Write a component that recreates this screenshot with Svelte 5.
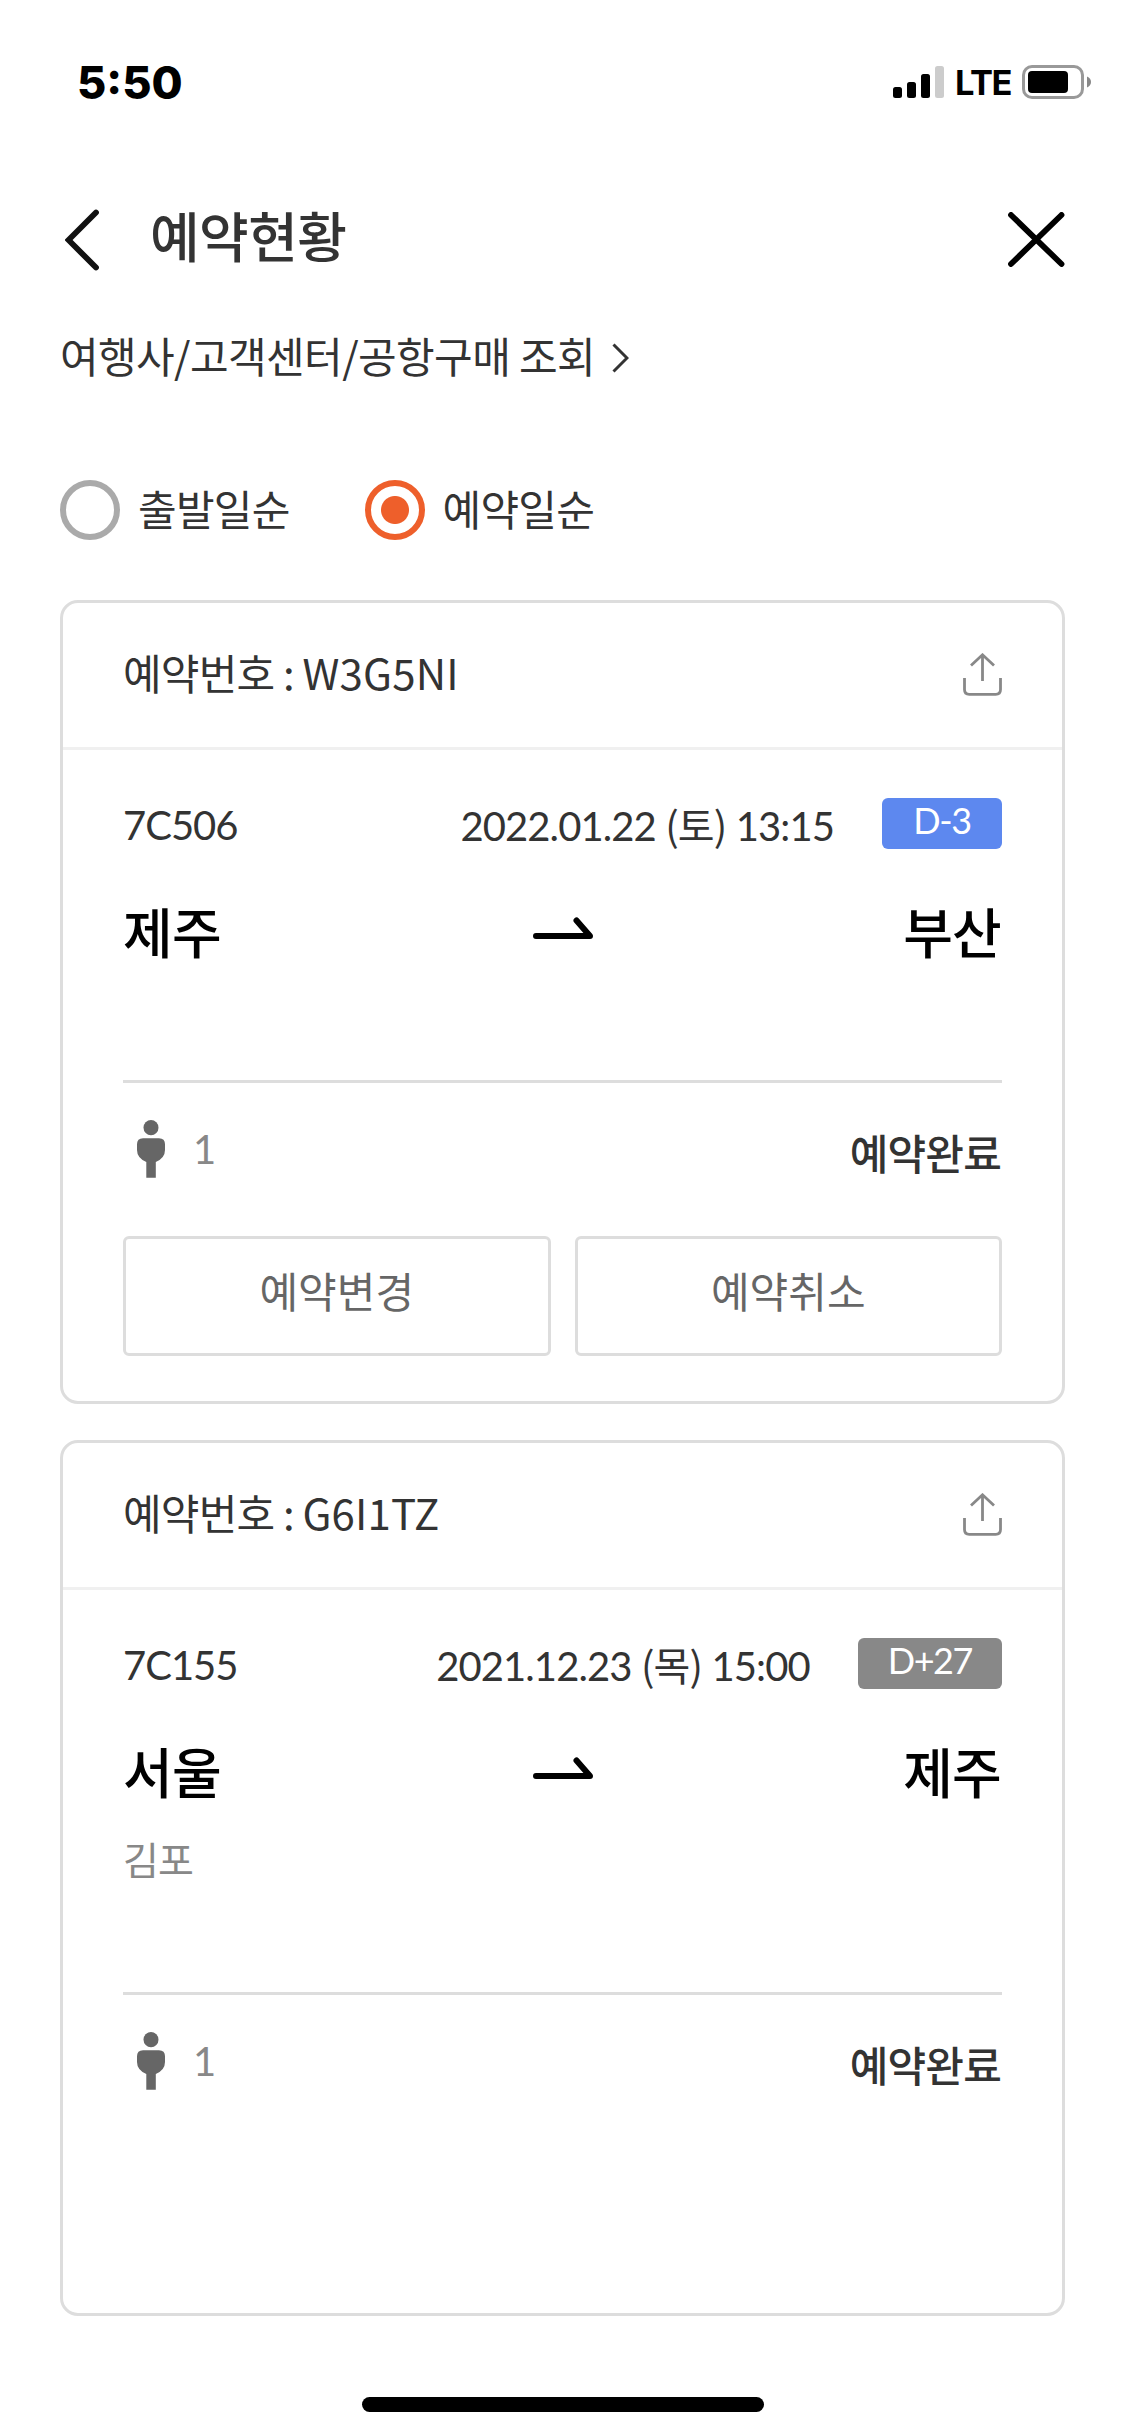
<script>
  let sortBy = $state('booked');

  const sortOptions = [
    { value: 'departure', label: '출발일순' },
    { value: 'booked', label: '예약일순' }
  ];

  const bookings = [
    {
      code: 'W3G5NI',
      flight: '7C506',
      date: '2022.01.22',
      day: '토',
      time: '13:15',
      dday: 'D-3',
      upcoming: true,
      from: '제주',
      to: '부산',
      passengers: 1,
      status: '예약완료'
    },
    {
      code: 'G6I1TZ',
      flight: '7C155',
      date: '2021.12.23',
      day: '목',
      time: '15:00',
      dday: 'D+27',
      upcoming: false,
      from: '서울',
      fromAirport: '김포',
      to: '제주',
      passengers: 1,
      status: '예약완료'
    }
  ];
</script>

<div class="screen">
  <div class="status-bar">
    <span class="clock">5:50</span>
    <div class="indicators">
      <svg width="51" height="32" viewBox="0 0 51 32">
        <rect x="0" y="21" width="9" height="11" rx="2.5" />
        <rect x="14" y="16" width="9" height="16" rx="2.5" />
        <rect x="28" y="8" width="9" height="24" rx="2.5" />
        <rect x="42" y="0" width="9" height="32" rx="2.5" fill="#ccc" />
      </svg>
      <span class="network">LTE</span>
      <svg width="69" height="34" viewBox="0 0 69 34">
        <rect x="1.5" y="1.5" width="59" height="31" rx="8.5" fill="none" stroke="#999" stroke-width="3" />
        <rect x="6" y="6" width="40" height="22" rx="4" />
        <path d="M65 11.5c2.600 1 4 3 4 5.500s-1.400 4.500-4 5.500z" fill="#888" />
      </svg>
    </div>
  </div>

  <header>
    <button aria-label="뒤로">
      <svg width="34" height="62" viewBox="0 0 34 62">
        <path d="M31 3.500L3.500 31L31 58.500" fill="none" stroke="#111" stroke-width="5.800" stroke-linecap="round" />
      </svg>
    </button>
    <h1>예약현황</h1>
    <button class="close" aria-label="닫기">
      <svg width="57" height="55" viewBox="0 0 57 55">
        <path d="M3 3L53.500 52M53.500 3L3 52" stroke="#000" stroke-width="5.800" stroke-linecap="round" />
      </svg>
    </button>
  </header>

  <a class="lookup" href="#lookup">
    <span>여행사/고객센터/공항구매 조회</span>
    <svg width="17" height="30" viewBox="0 0 17 30">
      <path d="M1.500 1.500L15 15L1.500 28.500" fill="none" stroke="#333" stroke-width="3" />
    </svg>
  </a>

  <div class="sort">
    {#each sortOptions as option}
      <label>
        <input type="radio" name="sort" value={option.value} bind:group={sortBy} />
        <span>{option.label}</span>
      </label>
    {/each}
  </div>

  <main>
    {#each bookings as b}
      <section class="card">
        <div class="card-head">
          <span class="title">예약번호 : <span class="code">{b.code}</span></span>
          <svg width="39" height="43" viewBox="0 0 39 43" fill="none" stroke="#888" stroke-width="2.800">
            <path d="M19.500 28V2M8 12.500L19.500 1.800L31 12.500" />
            <path d="M1.500 25V36.500Q1.500 41.300 6.300 41.300H32.700Q37.500 41.300 37.500 36.500V25" />
          </svg>
        </div>
        <div class="card-body">
          <div class="flight">
            <span class="num">{b.flight}</span>
            <span class="when">{b.date} <span class="day">({b.day})</span> {b.time}</span>
            <span class="dday" class:upcoming={b.upcoming}>{b.dday}</span>
          </div>
          <div class="route">
            <strong>{b.from}</strong>
            <svg width="60" height="24" viewBox="0 0 60 24">
              <path d="M3 19H57L43.500 3.500" fill="none" stroke="#000" stroke-width="6" stroke-linecap="round" stroke-linejoin="round" />
            </svg>
            <strong class="to">{b.to}</strong>
          </div>
          {#if b.fromAirport}
            <div class="airport">{b.fromAirport}</div>
          {/if}
          <div class="summary">
            <svg width="28" height="58" viewBox="0 0 28 58" fill="#666">
              <ellipse cx="14" cy="7.700" rx="7.500" ry="7.600" />
              <path d="M6 18.300H22Q28 18.300 28 24.300V30Q28 38 18.800 42V57.700H9.300V42Q0 38 0 30V24.300Q0 18.300 6 18.300Z" />
            </svg>
            <span class="count">{b.passengers}</span>
            <span class="state">{b.status}</span>
          </div>
          <div class="actions">
            {#if b.upcoming}
              <button>예약변경</button>
              <button>예약취소</button>
            {/if}
          </div>
        </div>
      </section>
    {/each}
  </main>

  <div class="home-indicator"></div>
</div>

<style>
  :global(body) {
    background: #fff;
  }

  .screen {
    box-sizing: border-box;
    width: 1125px;
    height: 2436px;
    padding: 0 60px;
    display: flex;
    flex-direction: column;
    overflow: hidden;
    background: #fff;
    color: #333;
    font-family: 'Noto Sans CJK KR', sans-serif;
    font-size: 42px;
    line-height: 60px;
  }

  svg {
    display: block;
    flex: none;
  }

  button {
    padding: 0;
    border: 0;
    background: none;
    font: inherit;
    color: inherit;
  }

  .status-bar {
    height: 164px;
    margin-right: -26px;
    padding-left: 17px;
    display: flex;
    justify-content: space-between;
    align-items: center;
    color: #000;
  }

  .clock {
    margin-top: 1px;
    font-family: Inter, sans-serif;
    font-weight: 800;
    font-size: 45px;
  }

  .indicators {
    display: flex;
    align-items: center;
  }

  .network {
    width: 78px;
    margin-top: 2px;
    font-family: Inter, sans-serif;
    font-weight: 700;
    font-size: 34.500px;
    letter-spacing: -1.500px;
    text-align: center;
  }

  header {
    height: 152px;
    padding-left: 5px;
    display: flex;
    align-items: center;
  }

  .close {
    margin-bottom: 2px;
  }

  h1 {
    flex: 1;
    margin: 0 0 11px 51px;
    font-size: 54px;
    font-weight: 500;
    line-height: 80px;
    letter-spacing: -0.6px;
  }

  .lookup {
    height: 84px;
    display: flex;
    align-items: center;
    gap: 17px;
    color: inherit;
    text-decoration: none;
    letter-spacing: -0.6px;
  }

  .lookup span {
    margin-bottom: 6px;
  }

  .lookup svg {
    margin-bottom: 1px;
  }

  .sort {
    height: 60px;
    margin-top: 80px;
    display: flex;
    gap: 75px;
  }

  label {
    display: flex;
    align-items: center;
    gap: 18px;
    letter-spacing: -0.75px;
  }

  label span {
    margin-bottom: 4px;
  }

  input {
    appearance: none;
    box-sizing: border-box;
    width: 60px;
    height: 60px;
    margin: 0;
    border: 6px solid #aaa;
    border-radius: 50%;
  }

  input:checked {
    border-color: #ee5f2b;
    background: radial-gradient(circle, #ee5f2b 13.500px, #fff 14.500px);
  }

  main {
    margin-top: 60px;
    display: flex;
    flex-direction: column;
    gap: 36px;
  }

  .card {
    border: 3px solid #ddd;
    border-radius: 18px;
  }

  .card-head {
    height: 144px;
    padding: 0 60px;
    display: flex;
    justify-content: space-between;
    align-items: center;
    border-bottom: 3px solid #f0f0f0;
  }

  .card-head svg {
    margin-bottom: 2px;
  }

  .title {
    margin-bottom: 6px;
    letter-spacing: -0.8px;
  }

  .code {
    letter-spacing: 0.2px;
  }

  .card-body {
    padding: 48px 60px 45px;
  }

  .flight {
    height: 51px;
    display: flex;
    align-items: center;
  }

  .num,
  .when,
  .count {
    font-family: Lato, 'Noto Sans CJK KR', sans-serif;
    font-size: 40px;
    letter-spacing: -0.025em;
  }

  .num {
    margin-top: 3px;
  }

  .when {
    margin: 2px 0 0 auto;
    letter-spacing: -0.9px;
  }

  .day {
    font-family: 'Noto Sans CJK KR', sans-serif;
  }

  .dday {
    box-sizing: border-box;
    height: 51px;
    min-width: 120px;
    margin-left: 48px;
    padding: 0 30px;
    border-radius: 6px;
    background: #888;
    color: #fff;
    font-family: Lato, sans-serif;
    font-size: 36px;
    line-height: 45px;
    letter-spacing: -0.04em;
    text-align: center;
  }

  .dday.upcoming {
    background: #5d88ef;
  }

  .route {
    height: 80px;
    margin-top: 42px;
    display: flex;
    align-items: center;
    color: #000;
  }

  .route svg {
    margin-bottom: 4px;
  }

  strong {
    flex: 1;
    font-size: 54px;
    font-weight: 500;
    line-height: 80px;
    letter-spacing: -0.8px;
  }

  .to {
    padding-right: 1px;
    text-align: right;
  }

  strong:first-child {
    padding-right: 1px;
  }

  .airport {
    height: 61px;
    padding-top: 11px;
    color: #888;
    font-size: 39px;
    line-height: 72px;
    letter-spacing: -0.025em;
  }

  .summary {
    height: 153px;
    margin-top: 109px;
    padding: 0 1px 0 14px;
    display: flex;
    align-items: center;
    border-top: 3px solid #ddd;
  }

  .summary svg {
    margin-bottom: 22px;
  }

  .count {
    margin: 0 0 21px 28px;
    color: #888;
  }

  .state {
    margin: 0 0 15px auto;
    font-weight: 500;
    letter-spacing: -0.8px;
  }

  .actions {
    height: 120px;
    display: flex;
    gap: 24px;
  }

  .actions button {
    flex: 1;
    padding-bottom: 12px;
    border: 3px solid #ddd;
    border-radius: 6px;
    color: #666;
  }

  .home-indicator {
    width: 402px;
    height: 15px;
    margin: auto auto 24px;
    border-radius: 8px;
    background: #000;
  }
</style>
